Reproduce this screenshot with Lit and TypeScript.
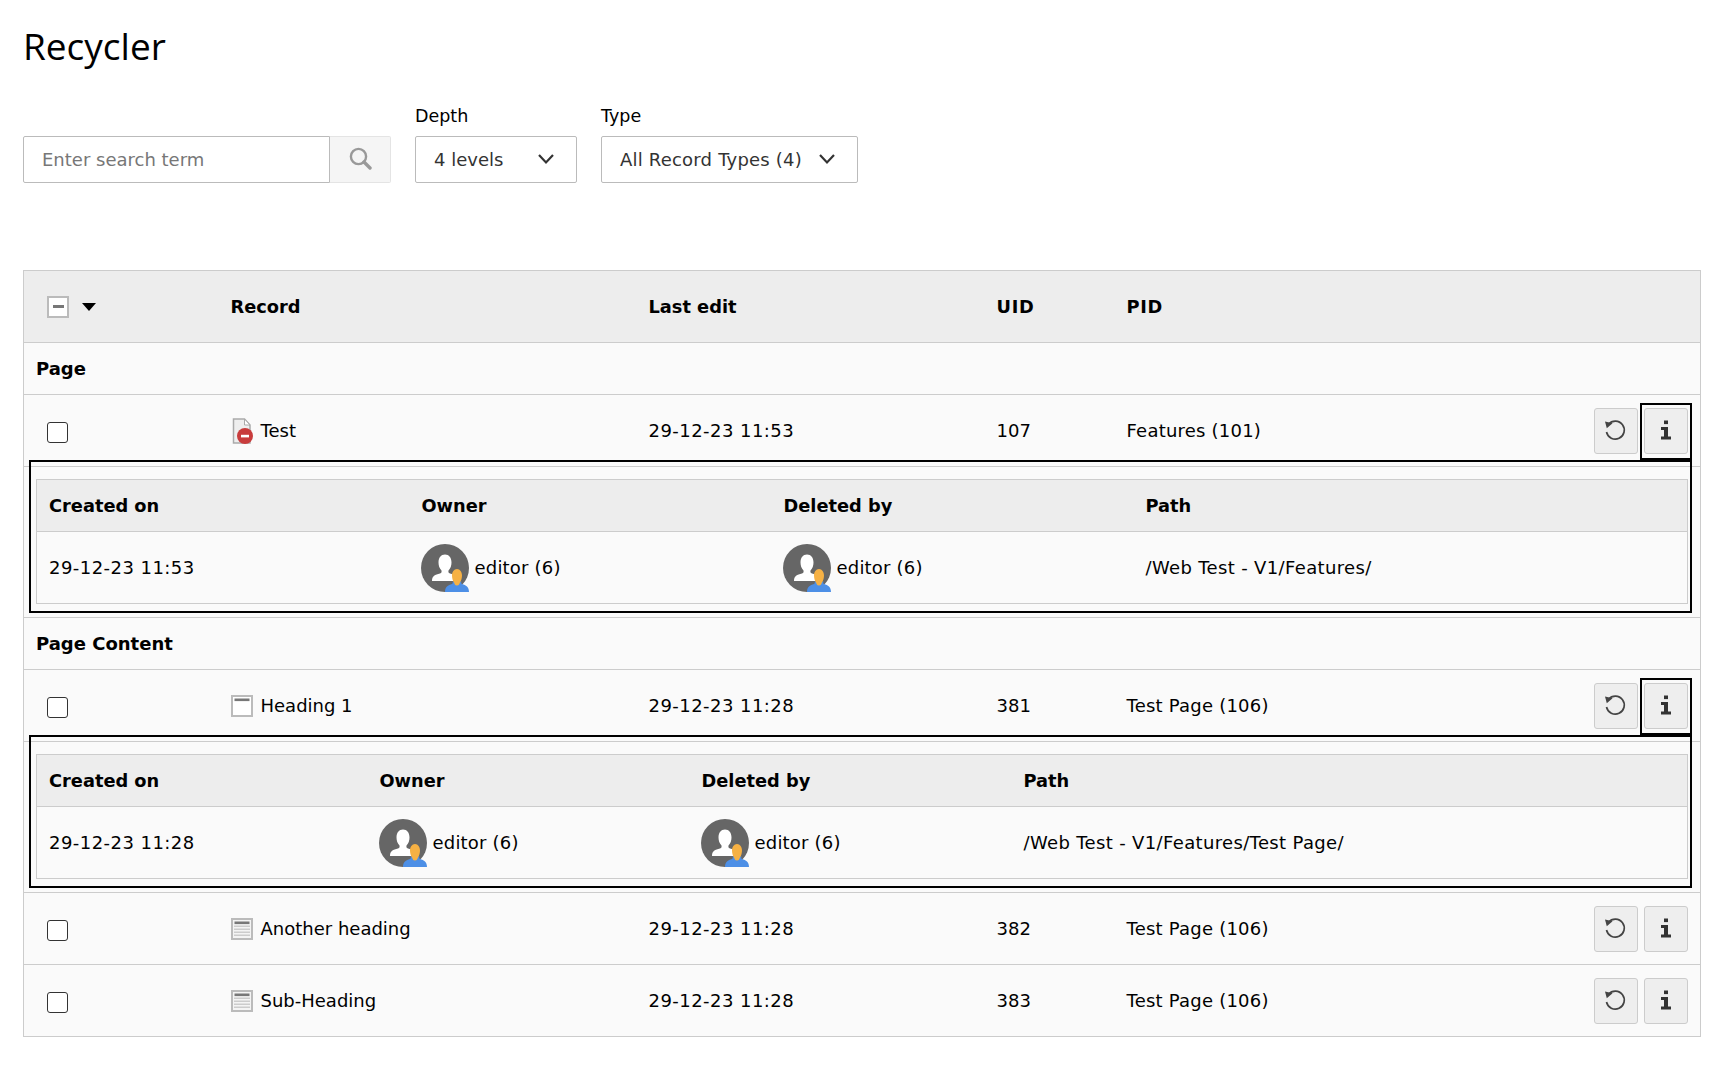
import { LitElement, html, css, svg } from 'lit';
import { customElement } from 'lit/decorators.js';

type Detail = { created: string; path: string; widths: number[] };
type Rec = { title: string; edit: string; uid: string; pid: string; icon: 'page' | 'heading' | 'text'; detail?: Detail };
type Group = { name?: string; records: Rec[] };

const groups: Group[] = [
  {
    name: 'Page',
    records: [
      {
        title: 'Test', edit: '29-12-23 11:53', uid: '107', pid: 'Features (101)', icon: 'page',
        detail: { created: '29-12-23 11:53', path: '/Web Test - V1/Features/', widths: [373, 362, 362] },
      },
    ],
  },
  {
    name: 'Page Content',
    records: [
      {
        title: 'Heading 1', edit: '29-12-23 11:28', uid: '381', pid: 'Test Page (106)', icon: 'heading',
        detail: { created: '29-12-23 11:28', path: '/Web Test - V1/Features/Test Page/', widths: [331, 322, 322] },
      },
      { title: 'Another heading', edit: '29-12-23 11:28', uid: '382', pid: 'Test Page (106)', icon: 'text' },
      { title: 'Sub-Heading', edit: '29-12-23 11:28', uid: '383', pid: 'Test Page (106)', icon: 'text' },
    ],
  },
];

const searchIcon = html`<svg width="24" height="24" viewBox="0 0 24 24" fill="none" stroke="#999" stroke-width="2.4">
  <circle cx="10.5" cy="10.5" r="7.6"></circle>
  <path d="M16 16l6 6" stroke-width="3.4" stroke-linecap="round"></path>
</svg>`;

const chevron = html`<svg class="chevron" width="18" height="12" viewBox="0 0 18 12" fill="none" stroke="#333" stroke-width="2.2">
  <path d="M2 2l7 7.5L16 2"></path>
</svg>`;

const restoreIcon = html`<svg width="24" height="24" viewBox="0 0 24 24" fill="none">
  <path d="M4.500 5.200A9 9 0 1 1 2.500 13" stroke="#444" stroke-width="1.7"></path>
  <path d="M1 2.600l7.600 1.600-5.800 5z" fill="#444"></path>
</svg>`;

const infoIcon = html`<svg class="info" width="12" height="20" viewBox="0 0 12 20" fill="#333">
  <rect x="4" y="0.5" width="4" height="3.600"></rect>
  <path d="M1 7h7v9.400h3V19.500H1v-3.100h3V10H1z"></path>
</svg>`;

function recordIcon(kind: Rec['icon']) {
  if (kind === 'page') {
    return html`<svg class="rec-icon" width="22" height="26" viewBox="0 0 22 26">
      <path d="M2.500 1h11l5.500 6v18H2.500z" fill="#eee" stroke="#aaa" stroke-width="1.500"></path>
      <path d="M13.500 1v6H19z" fill="#fff" stroke="#aaa" stroke-width="1"></path>
      <circle cx="14" cy="18" r="8" fill="#c83c3c"></circle>
      <rect x="10" y="16.800" width="8" height="2.600" fill="#fff"></rect>
    </svg>`;
  }
  const lines = kind === 'text'
    ? [7.5, 10.5, 13.5, 16.5].map((y) => svg`<rect x="3" y=${y} width="16" height="1.500" fill="#ccc"></rect>`)
    : [];
  return html`<svg class="rec-icon" width="22" height="22" viewBox="0 0 22 22">
    <rect x="1" y="1" width="20" height="20" fill=${kind === 'text' ? '#f4f4f4' : '#fff'} stroke="#bbb" stroke-width="2"></rect>
    <rect x="3.500" y="3.500" width="15" height="2.600" fill="#777"></rect>
    ${lines}
  </svg>`;
}

const avatar = html`<svg class="avatar" width="48" height="48" viewBox="0 0 48 48">
  <circle cx="24" cy="24" r="24" fill="#666"></circle>
  <path d="M11 37c0-5 3-6.500 8-7.500 1.500-.5 1.800-1.500 1.500-3-2-2-3-5-3-8 0-5 2.500-8 6.500-8s6.500 3 6.500 8c0 3-1 6-3 8-.3 1.500 0 2.500 1.500 3 5 1 8 2.500 8 7.500z" fill="#fff"></path>
  <path d="M24 48c0-5 3-7 7-8 1-.5 1-1.500.5-2.500h9c-.5 1-.5 2 .5 2.500 4 1 7 3 7 8z" fill="#4d8fe6"></path>
  <path d="M31 31.500c0-3.500 2-6.500 5-6.500s5 3 5 6.500c0 2.500-.7 5-2 7-.7 1.500-.7 3-3 3s-2.300-1.500-3-3c-1.300-2-2-4.500-2-7z" fill="#f6b144"></path>
</svg>`;

@customElement('app-root')
export class AppRoot extends LitElement {
  static styles = css`
    :host {
      display: block;
      padding: 0 23px 38px 23px;
      background: #fff;
      color: #000;
      font-family: 'DejaVu Sans', Verdana, sans-serif;
      font-size: 18px;
    }

    h1 {
      margin: 0;
      padding-top: 21px;
      height: 72px;
      box-sizing: border-box;
      font-family: 'Open Sans', sans-serif;
      font-size: 37px;
      font-weight: 400;
      line-height: 50px;
    }

    .filters {
      display: flex;
      align-items: flex-end;
      height: 111px;
      margin-bottom: 87px;
    }

    .search {
      display: flex;
      margin-right: 24px;
    }

    .search-input {
      width: 307px;
      height: 47px;
      box-sizing: border-box;
      display: flex;
      align-items: center;
      padding: 0 18px;
      border: 1px solid #bbb;
      border-radius: 2px 0 0 2px;
      color: #777;
    }

    .search-btn {
      width: 61px;
      height: 47px;
      box-sizing: border-box;
      display: flex;
      align-items: center;
      justify-content: center;
      padding-bottom: 3px;
      background: #f5f5f5;
      border: 1px solid #e4e4e4;
      border-left: 0;
      border-radius: 0 2px 2px 0;
    }

    .field + .field {
      margin-left: 24px;
    }

    .field label {
      display: block;
      height: 34px;
      line-height: 28px;
      font-size: 17.5px;
    }

    .select {
      height: 47px;
      box-sizing: border-box;
      display: flex;
      align-items: center;
      justify-content: space-between;
      padding: 0 21px 0 18px;
      border: 1px solid #bbb;
      border-radius: 2px;
      color: #333;
    }

    .chevron {
      margin-top: -2px;
    }

    .select.depth {
      width: 162px;
    }

    .select.type {
      width: 257px;
      padding-right: 21px;
      letter-spacing: 0.2px;
    }

    table {
      border-collapse: collapse;
      table-layout: fixed;
      width: 100%;
    }

    .list {
      width: 1678px;
      border: 1px solid #ccc;
      background: #fafafa;
    }

    th {
      text-align: left;
      font-weight: 700;
      font-size: 17.8px;
      padding: 0 12px;
    }

    th.caps {
      letter-spacing: 0.7px;
    }

    td {
      padding: 0 12px;
      vertical-align: middle;
    }

    .list > thead > tr {
      height: 72px;
      background: #ededed;
    }

    .list > tbody > tr {
      border-top: 1px solid #ccc;
    }

    .group {
      height: 52px;
      font-weight: 700;
    }

    .record {
      height: 72px;
    }

    .num {
      letter-spacing: 0.45px;
    }

    .pid {
      letter-spacing: 0.22px;
    }

    .path {
      letter-spacing: 0.35px;
    }

    .check {
      display: block;
      margin: 3px 0 0 11px;
      width: 21px;
      height: 21px;
      box-sizing: border-box;
      border: 1.8px solid #333;
      border-radius: 3px;
      background: #fff;
    }

    .check-head {
      display: flex;
      align-items: center;
      margin-left: 11px;
    }

    .check-all {
      width: 22px;
      height: 22px;
      box-sizing: border-box;
      border: 2px solid #bbb;
      background: #fff;
      display: flex;
      align-items: center;
      justify-content: center;
    }

    .check-all span {
      width: 11px;
      height: 3px;
      background: #777;
    }

    .caret {
      width: 0;
      height: 0;
      margin-left: 13px;
      border-left: 7px solid transparent;
      border-right: 7px solid transparent;
      border-top: 8px solid #000;
    }

    .title {
      display: flex;
      align-items: center;
      gap: 8px;
    }

    .rec-icon {
      display: block;
      flex: none;
    }

    .actions-cell {
      position: relative;
      padding-right: 12px;
    }

    .actions {
      display: flex;
      justify-content: flex-end;
      gap: 6px;
    }

    .btn {
      width: 44px;
      height: 46px;
      box-sizing: border-box;
      display: flex;
      align-items: center;
      justify-content: center;
      background: #eee;
      border: 1px solid #ccc;
      border-radius: 3px;
    }

    .info {
      margin-top: -2px;
    }

    .mark-btn {
      position: absolute;
      top: 8px;
      bottom: 6px;
      right: 8px;
      width: 48px;
      border: 2px solid #000;
    }

    .detail-cell {
      position: relative;
      padding: 12px 12px 13px;
    }

    .mark-row {
      position: absolute;
      top: -7px;
      bottom: 4px;
      left: 5px;
      right: 8px;
      border: 2px solid #000;
      pointer-events: none;
    }

    .inner {
      border: 1px solid #ccc;
      background: #fafafa;
    }

    .inner thead tr {
      height: 52px;
      background: #ededed;
      border-bottom: 1px solid #ccc;
    }

    .inner tbody tr {
      height: 72px;
    }

    .user {
      display: flex;
      align-items: center;
      gap: 6px;
      margin-left: -1px;
      letter-spacing: 0.2px;
    }

    .avatar {
      display: block;
      flex: none;
    }
  `;

  private renderDetail(d: Detail) {
    return html`<tr>
      <td class="detail-cell" colspan="6">
        <div class="mark-row"></div>
        <table class="inner">
          <colgroup>
            ${d.widths.map((w) => html`<col style="width:${w}px" />`)}
            <col />
          </colgroup>
          <thead>
            <tr><th>Created on</th><th>Owner</th><th>Deleted by</th><th>Path</th></tr>
          </thead>
          <tbody>
            <tr>
              <td class="num">${d.created}</td>
              <td><div class="user">${avatar}<span>editor (6)</span></div></td>
              <td><div class="user">${avatar}<span>editor (6)</span></div></td>
              <td class="path">${d.path}</td>
            </tr>
          </tbody>
        </table>
      </td>
    </tr>`;
  }

  private renderRecord(r: Rec) {
    return html`<tr class="record">
        <td><span class="check"></span></td>
        <td><div class="title">${recordIcon(r.icon)}<span>${r.title}</span></div></td>
        <td class="num">${r.edit}</td>
        <td>${r.uid}</td>
        <td class="pid">${r.pid}</td>
        <td class="actions-cell">
          <div class="actions">
            <div class="btn">${restoreIcon}</div>
            <div class="btn">${infoIcon}</div>
          </div>
          ${r.detail ? html`<div class="mark-btn"></div>` : ''}
        </td>
      </tr>
      ${r.detail ? this.renderDetail(r.detail) : ''}`;
  }

  render() {
    return html`
      <h1>Recycler</h1>

      <div class="filters">
        <div class="search">
          <div class="search-input">Enter search term</div>
          <div class="search-btn">${searchIcon}</div>
        </div>
        <div class="field">
          <label>Depth</label>
          <div class="select depth"><span>4 levels</span>${chevron}</div>
        </div>
        <div class="field">
          <label>Type</label>
          <div class="select type"><span>All Record Types (4)</span>${chevron}</div>
        </div>
      </div>

      <table class="list">
        <colgroup>
          <col style="width:195px" />
          <col style="width:418px" />
          <col style="width:348px" />
          <col style="width:130px" />
          <col style="width:330px" />
          <col />
        </colgroup>
        <thead>
          <tr>
            <th><div class="check-head"><div class="check-all"><span></span></div><div class="caret"></div></div></th>
            <th>Record</th>
            <th>Last edit</th>
            <th class="caps">UID</th>
            <th class="caps">PID</th>
            <th></th>
          </tr>
        </thead>
        <tbody>
          ${groups.map(
            (g) => html`<tr class="group"><td colspan="6">${g.name}</td></tr>
              ${g.records.map((r) => this.renderRecord(r))}`
          )}
        </tbody>
      </table>
    `;
  }
}
